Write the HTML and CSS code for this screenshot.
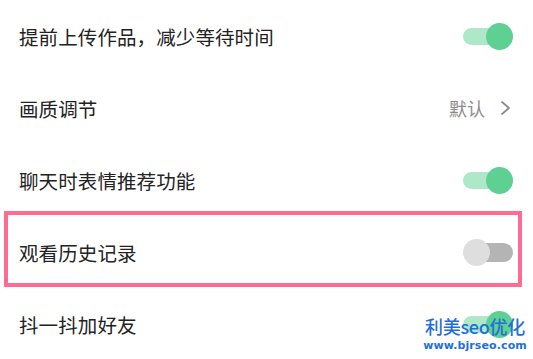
FILE: index.html
```html
<!DOCTYPE html>
<html lang="zh">
<head>
<meta charset="utf-8">
<link rel="stylesheet" href="styles.css">
</head>
<body>
<div class="list">
  <div class="row">
    <span class="label">提前上传作品，减少等待时间</span>
    <span class="toggle on"><span class="knob"></span></span>
  </div>
  <div class="row">
    <span class="label">画质调节</span>
    <span class="value">默认<svg class="chev" width="11" height="16" viewBox="0 0 11 16"><path d="M2 2 L9 8 L2 14" fill="none" stroke="#8c8c8c" stroke-width="1.8" stroke-linecap="round" stroke-linejoin="round"/></svg></span>
  </div>
  <div class="row">
    <span class="label">聊天时表情推荐功能</span>
    <span class="toggle on"><span class="knob"></span></span>
  </div>
  <div class="row highlight">
    <span class="label">观看历史记录</span>
    <span class="toggle off"><span class="knob"></span></span>
  </div>
  <div class="row">
    <span class="label">抖一抖加好友</span>
    <span class="toggle on"><span class="knob"></span></span>
  </div>
</div>
<div class="watermark">
  <div class="wm-title">利美seo优化</div>
  <div class="wm-url">www.bjrseo.com</div>
</div>
</body>
</html>
```
FILE: styles.css
```css
html, body {
  margin: 0;
  padding: 0;
  background: #ffffff;
}
body {
  width: 533px;
  height: 359px;
  overflow: hidden;
  position: relative;
  font-family: "Noto Sans CJK SC", "Noto Sans", sans-serif;
}
.list {
  display: flex;
  flex-direction: column;
}
.row {
  height: 72px;
  display: flex;
  align-items: center;
  justify-content: space-between;
  padding: 0 20px 0 19px;
  box-sizing: border-box;
}
.label {
  font-size: 19.5px;
  color: #222222;
  letter-spacing: 0.1px;
}
.value {
  display: flex;
  align-items: center;
  font-size: 18px;
  color: #8c8c8c;
  gap: 15px;
  margin-right: 2px;
}
.toggle {
  position: relative;
  width: 50px;
  height: 27px;
  display: block;
}
.toggle::before {
  content: "";
  position: absolute;
  top: 5px;
  height: 17px;
  left: 0;
  right: 0;
  border-radius: 9px;
}
.toggle .knob {
  position: absolute;
  top: 0;
  width: 27px;
  height: 27px;
  border-radius: 50%;
}
.toggle.on::before {
  background: #ade8c8;
}
.toggle.on .knob {
  right: 0;
  background: #5fd094;
}
.toggle.off::before {
  background: #b4b4b4;
  top: 4px;
  height: 19px;
  left: 14px;
  border-radius: 10px;
}
.toggle.off .knob {
  left: 0;
  background: #dedede;
}
.highlight {
  position: relative;
}
.highlight::after {
  content: "";
  position: absolute;
  left: 4px;
  right: 11px;
  top: -5px;
  bottom: 1px;
  border: 4.5px solid #ff6b93;
  pointer-events: none;
}
.watermark {
  position: absolute;
  left: 420px;
  top: 313px;
  width: 110px;
  display: flex;
  flex-direction: column;
  align-items: center;
  color: #1f6fd8;
  white-space: nowrap;
}
.wm-title {
  font-size: 18px;
  line-height: 26px;
  font-family: "Noto Sans CJK SC", sans-serif;
  font-weight: 500;
  letter-spacing: -0.3px;
}
.wm-url {
  font-family: "DejaVu Sans", sans-serif;
  font-weight: bold;
  font-size: 11px;
  line-height: 13px;
  letter-spacing: 0.1px;
}
```
